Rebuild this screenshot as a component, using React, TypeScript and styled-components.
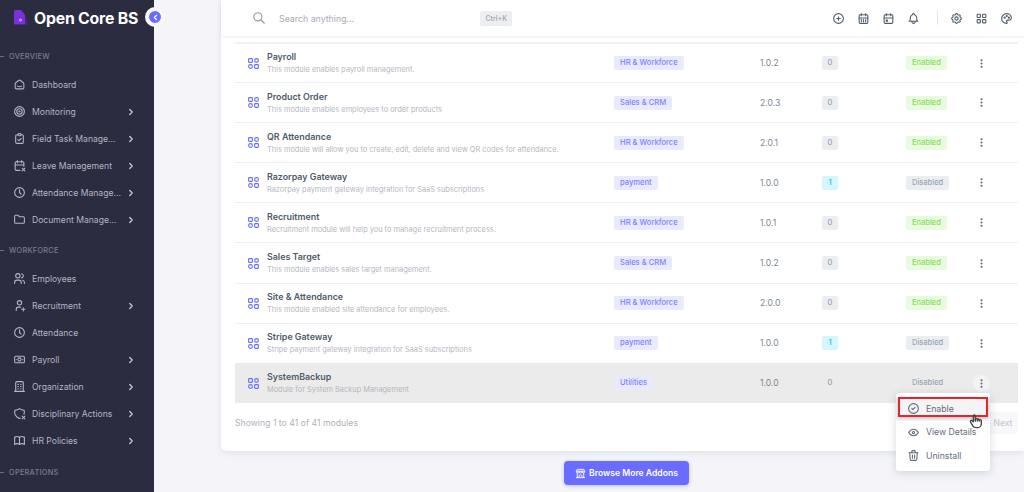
import React from 'react';
import styled, { createGlobalStyle } from 'styled-components';
import {
  TbSmartHome, TbTarget, TbClipboardCheck, TbCalendarX, TbClock, TbFolder, TbUsers, TbUserPlus,
  TbCashBanknote, TbBuilding, TbShieldX, TbBook, TbChevronRight, TbChevronLeft, TbSearch,
  TbCirclePlus, TbCalendarEvent, TbCalendarWeek, TbBell, TbSettings, TbLayoutGrid, TbPalette,
  TbDotsVertical, TbCircleCheck, TbEye, TbTrash, TbBuildingStore, TbHandFinger,
} from 'react-icons/tb';

const GlobalStyle = createGlobalStyle`
  html, body, #root { margin: 0; height: 100%; }
  body {
    overflow: hidden;
    background: #f5f5f9;
    font-family: Inter, "Noto Sans", sans-serif;
    color: #566a7f;
  }
  * { box-sizing: border-box; }
`;

const Page = styled.div`
  display: flex;
  width: 1024px;
  height: 492px;
  overflow: hidden;
  position: relative;
`;

const Sidebar = styled.aside`
  flex: 0 0 154px;
  height: 492px;
  background: #2b2c40;
  display: flex;
  flex-direction: column;
  position: relative;
  overflow: visible;
  z-index: 3;
`;

const Brand = styled.div`
  height: 36px;
  display: flex;
  align-items: center;
  gap: 5px;
  padding-left: 14px;
  color: #fff;
  font-size: 15.8px;
  font-weight: 700;
  letter-spacing: -0.2px;
`;

const Toggle = styled.button`
  position: absolute;
  left: 145px;
  top: 7px;
  width: 20px;
  height: 20px;
  padding: 0;
  border: 4px solid #f8f8fb;
  border-radius: 50%;
  background: #696cff;
  color: #fff;
  display: flex;
  align-items: center;
  justify-content: center;
`;

const SectionLabel = styled.div<{ $top: number }>`
  margin-top: ${p => p.$top}px;
  height: 14px;
  display: flex;
  align-items: center;
  gap: 5px;
  font-size: 7.3px;
  font-weight: 500;
  letter-spacing: 0.3px;
  color: #7b7c8f;

  &::before {
    content: '';
    width: 4px;
    height: 1px;
    background: #6d6e80;
  }
`;

const NavList = styled.div`
  margin-top: 8px;
  display: flex;
  flex-direction: column;
`;

const NavItem = styled.div`
  height: 27px;
  display: flex;
  align-items: center;
  padding-left: 13px;
  font-size: 8.6px;
  color: #b4b5c3;
  white-space: nowrap;

  svg { flex: none; }
`;

const NavText = styled.span`
  margin-left: 6px;
  width: 91px;
`;

const NavChevron = styled.span`
  margin-left: 3px;
  display: flex;
  color: #c8c9d4;
`;

const Main = styled.main`
  flex: 1;
  padding-left: 67px;
  position: relative;
  display: flex;
  flex-direction: column;
  align-items: stretch;
`;

const TopBar = styled.header`
  position: absolute;
  left: 67px;
  top: 0;
  right: 0;
  height: 36px;
  background: rgba(255, 255, 255, 0.96);
  box-shadow: 0 1px 3px rgba(67, 89, 113, 0.1);
  border-radius: 0 0 0 3px;
  display: flex;
  align-items: center;
  padding-left: 31px;
  z-index: 2;
`;

const SearchBox = styled.div`
  width: 260px;
  display: flex;
  align-items: center;
  color: #9a9ca5;
  font-size: 8.8px;
`;

const SearchText = styled.span`
  margin-left: 13px;
  flex: 1;
  color: #a8aab2;
`;

const Kbd = styled.span`
  height: 15px;
  padding: 0 5px;
  border-radius: 2px;
  background: #eceef1;
  color: #a1a3ac;
  font-size: 7px;
  font-weight: 500;
  line-height: 15px;
`;

const TopIcons = styled.div`
  margin-left: auto;
  display: flex;
  align-items: center;
  color: #4f5d6c;
  padding-right: 11.5px;
`;

const TopIcon = styled.span`
  display: flex;
  margin-left: 12px;
`;

const Divider = styled.span`
  width: 1px;
  height: 14px;
  margin-left: 17px;
  background: #e6e7ea;
`;

const Card = styled.section`
  margin-top: 0;
  height: 451px;
  background: #fff;
  border-radius: 0 0 0 5px;
  box-shadow: 0 2px 6px rgba(67, 89, 113, 0.12);
  padding: 42px 6px 0 14px;
  flex: none;
`;

const Row = styled.div<{ $active?: boolean }>`
  height: 40.1px;
  display: grid;
  grid-template-columns: 19px 347px 146px 62px 84px 66.5px 1fr;
  align-items: center;
  padding-left: 13px;
  border-top: 1px solid ${p => (p.$active ? '#ebebeb' : '#eeeff1')};
  background: ${p => (p.$active ? '#ebebeb' : 'transparent')};

  &:first-child { border-top: 2px solid #f0f1f3; }
`;

const ModuleIcon = styled.svg`
  width: 11px;
  height: 11px;
  color: #696cff;
`;

const Info = styled.div`
  display: flex;
  flex-direction: column;
  gap: 3px;
  white-space: nowrap;
`;

const Name = styled.div`
  font-size: 8.9px;
  font-weight: 600;
  line-height: 11px;
  color: #4f5b69;
`;

const Desc = styled.div`
  font-size: 7.4px;
  line-height: 10px;
  color: #b5b7bf;
`;

const Category = styled.span`
  justify-self: start;
  height: 14px;
  padding: 0 6px;
  border-radius: 2px;
  background: #e9e9ff;
  color: #7f82ff;
  font-size: 7.6px;
  font-weight: 500;
  line-height: 14px;
`;

const Version = styled.span`
  font-size: 8.6px;
  color: #7b8793;
`;

const Count = styled.span<{ $tone: 'gray' | 'blue' | 'none' }>`
  justify-self: start;
  width: 16px;
  height: 14px;
  border-radius: 2px;
  text-align: center;
  line-height: 14px;
  font-size: 7.6px;
  font-weight: 500;
  background: ${p => (p.$tone === 'blue' ? '#d7f5fc' : p.$tone === 'gray' ? '#ebeef0' : 'transparent')};
  color: ${p => (p.$tone === 'blue' ? '#03c3ec' : '#98a3b0')};
`;

const Status = styled.span<{ $on: boolean; $plain?: boolean }>`
  justify-self: start;
  height: 14px;
  padding: 0 6px;
  border-radius: 2px;
  background: ${p => (p.$plain ? 'transparent' : p.$on ? '#e8fadf' : '#ebeef0')};
  color: ${p => (p.$on ? '#86e054' : '#9aa4b0')};
  font-size: 7.5px;
  font-weight: 500;
  line-height: 14px;
`;

const MoreButton = styled.span<{ $active?: boolean }>`
  width: 17px;
  height: 17px;
  border-radius: 50%;
  display: flex;
  align-items: center;
  justify-content: center;
  color: #566a7f;
  background: ${p => (p.$active ? '#f3f3f4' : 'transparent')};
`;

const Footer = styled.div`
  height: 40px;
  display: flex;
  align-items: center;
  justify-content: space-between;
  font-size: 8.7px;
  color: #b0b2ba;
`;

const NextButton = styled.span`
  width: 30px;
  height: 22px;
  display: flex;
  align-items: center;
  justify-content: center;
  border-radius: 3px;
  background: #f8f8fa;
  color: #c9cbd1;
  font-size: 8.5px;
  font-weight: 500;
`;

const BrowseRow = styled.div`
  margin-top: 10px;
  margin-left: 343px;
  flex: none;
`;

const BrowseButton = styled.button`
  width: 125px;
  height: 24px;
  display: flex;
  align-items: center;
  justify-content: center;
  gap: 3px;
  border: 0;
  border-radius: 4px;
  background: #696cff;
  box-shadow: 0 1px 4px rgba(105, 108, 255, 0.4);
  color: #fff;
  font: 600 8.6px Inter, sans-serif;
`;

const Menu = styled.div`
  position: absolute;
  left: 896px;
  top: 393px;
  width: 94px;
  height: 78px;
  padding: 4px 0;
  background: #fff;
  border-radius: 3px;
  box-shadow: 0 2px 8px rgba(67, 89, 113, 0.22);
  z-index: 4;
`;

const MenuItem = styled.div<{ $hover?: boolean }>`
  height: 23.5px;
  display: flex;
  align-items: center;
  gap: 6px;
  padding-left: 11px;
  font-size: 8.7px;
  color: #5f6d7c;
  background: ${p => (p.$hover ? '#f4f4f6' : 'transparent')};
`;

const RedBox = styled.div`
  position: absolute;
  left: 898px;
  top: 397px;
  width: 90px;
  height: 20px;
  border: 2px solid #e3262c;
  box-shadow: 0 1px 3px rgba(0, 0, 0, 0.25);
  z-index: 5;
`;

const Cursor = styled.div`
  position: absolute;
  left: 968px;
  top: 413px;
  display: flex;
  color: #444;
  z-index: 6;
`;

const Logo = () => (
  <svg width="15" height="16" viewBox="0 0 15 16">
    <path d="M0 1.5Q0 0 1.5 0H7L11 5V14.5H1.5Q0 14.5 0 13Z" fill="#7c2fe0" />
    <path d="M11 6L14.5 15H3V14.5H11Z" fill="#3b2a80" />
    <circle cx="6.5" cy="10" r="1.6" fill="#b9a2f5" />
  </svg>
);

const AppsIcon = () => (
  <ModuleIcon viewBox="0 0 11 11" fill="none" stroke="currentColor" strokeWidth="1.1">
    <rect x="0.6" y="0.6" width="3.8" height="3.8" rx="0.8" />
    <circle cx="8.5" cy="2.5" r="1.9" />
    <circle cx="2.5" cy="8.5" r="1.9" />
    <rect x="6.6" y="6.6" width="3.8" height="3.8" rx="0.8" />
  </ModuleIcon>
);

type Nav = { icon: React.ComponentType<{ size?: number }>; label: string; more?: boolean };

const overview: Nav[] = [
  { icon: TbSmartHome, label: 'Dashboard' },
  { icon: TbTarget, label: 'Monitoring', more: true },
  { icon: TbClipboardCheck, label: 'Field Task Manage...', more: true },
  { icon: TbCalendarX, label: 'Leave Management', more: true },
  { icon: TbClock, label: 'Attendance Manage...', more: true },
  { icon: TbFolder, label: 'Document Manage...', more: true },
];

const workforce: Nav[] = [
  { icon: TbUsers, label: 'Employees' },
  { icon: TbUserPlus, label: 'Recruitment', more: true },
  { icon: TbClock, label: 'Attendance' },
  { icon: TbCashBanknote, label: 'Payroll', more: true },
  { icon: TbBuilding, label: 'Organization', more: true },
  { icon: TbShieldX, label: 'Disciplinary Actions', more: true },
  { icon: TbBook, label: 'HR Policies', more: true },
];

const modules = [
  { name: 'Payroll', desc: 'This module enables payroll management.', cat: 'HR & Workforce', ver: '1.0.2', count: 0, on: true },
  { name: 'Product Order', desc: 'This module enables employees to order products', cat: 'Sales & CRM', ver: '2.0.3', count: 0, on: true },
  { name: 'QR Attendance', desc: 'This module will allow you to create, edit, delete and view QR codes for attendance.', cat: 'HR & Workforce', ver: '2.0.1', count: 0, on: true },
  { name: 'Razorpay Gateway', desc: 'Razorpay payment gateway integration for SaaS subscriptions', cat: 'payment', ver: '1.0.0', count: 1, on: false },
  { name: 'Recruitment', desc: 'Recruitment module will help you to manage recruitment process.', cat: 'HR & Workforce', ver: '1.0.1', count: 0, on: true },
  { name: 'Sales Target', desc: 'This module enables sales target management.', cat: 'Sales & CRM', ver: '1.0.2', count: 0, on: true },
  { name: 'Site & Attendance', desc: 'This module enabled site attendance for employees.', cat: 'HR & Workforce', ver: '2.0.0', count: 0, on: true },
  { name: 'Stripe Gateway', desc: 'Stripe payment gateway integration for SaaS subscriptions', cat: 'payment', ver: '1.0.0', count: 1, on: false },
  { name: 'SystemBackup', desc: 'Module for System Backup Management', cat: 'Utilities', ver: '1.0.0', count: 0, on: false, active: true },
];

const NavGroup = ({ items }: { items: Nav[] }) => (
  <NavList>
    {items.map(({ icon: Icon, label, more }) => (
      <NavItem key={label}>
        <Icon size={13} />
        <NavText>{label}</NavText>
        {more && (
          <NavChevron>
            <TbChevronRight size={10} strokeWidth={3} />
          </NavChevron>
        )}
      </NavItem>
    ))}
  </NavList>
);

export default function App() {
  return (
    <Page>
      <GlobalStyle />
      <Sidebar>
        <Brand>
          <Logo />
          Open Core BS
        </Brand>
        <Toggle>
          <TbChevronLeft size={9} strokeWidth={3} />
        </Toggle>
        <SectionLabel $top={13}>OVERVIEW</SectionLabel>
        <NavGroup items={overview} />
        <SectionLabel $top={10}>WORKFORCE</SectionLabel>
        <NavGroup items={workforce} />
        <SectionLabel $top={11}>OPERATIONS</SectionLabel>
      </Sidebar>
      <Main>
        <TopBar>
          <SearchBox>
            <TbSearch size={14} />
            <SearchText>Search anything...</SearchText>
            <Kbd>Ctrl+K</Kbd>
          </SearchBox>
          <TopIcons>
            <TopIcon><TbCirclePlus size={13} /></TopIcon>
            <TopIcon><TbCalendarWeek size={13} /></TopIcon>
            <TopIcon><TbCalendarEvent size={13} /></TopIcon>
            <TopIcon><TbBell size={13} /></TopIcon>
            <Divider />
            <TopIcon><TbSettings size={13} /></TopIcon>
            <TopIcon><TbLayoutGrid size={13} /></TopIcon>
            <TopIcon><TbPalette size={13} /></TopIcon>
          </TopIcons>
        </TopBar>
        <Card>
          {modules.map(m => (
            <Row key={m.name} $active={m.active}>
              <AppsIcon />
              <Info>
                <Name>{m.name}</Name>
                <Desc>{m.desc}</Desc>
              </Info>
              <Category>{m.cat}</Category>
              <Version>{m.ver}</Version>
              <Count $tone={m.active ? 'none' : m.count ? 'blue' : 'gray'}>{m.count}</Count>
              <Status $on={m.on} $plain={m.active}>{m.on ? 'Enabled' : 'Disabled'}</Status>
              <MoreButton $active={m.active}>
                <TbDotsVertical size={11} strokeWidth={2.6} />
              </MoreButton>
            </Row>
          ))}
          <Footer>
            <span>Showing 1 to 41 of 41 modules</span>
            <NextButton>Next</NextButton>
          </Footer>
        </Card>
        <BrowseRow>
          <BrowseButton>
            <TbBuildingStore size={11} />
            Browse More Addons
          </BrowseButton>
        </BrowseRow>
      </Main>
      <Menu>
        <MenuItem $hover><TbCircleCheck size={13} />Enable</MenuItem>
        <MenuItem><TbEye size={13} />View Details</MenuItem>
        <MenuItem><TbTrash size={13} />Uninstall</MenuItem>
      </Menu>
      <RedBox />
      <Cursor>
        <TbHandFinger size={16} />
      </Cursor>
    </Page>
  );
}
